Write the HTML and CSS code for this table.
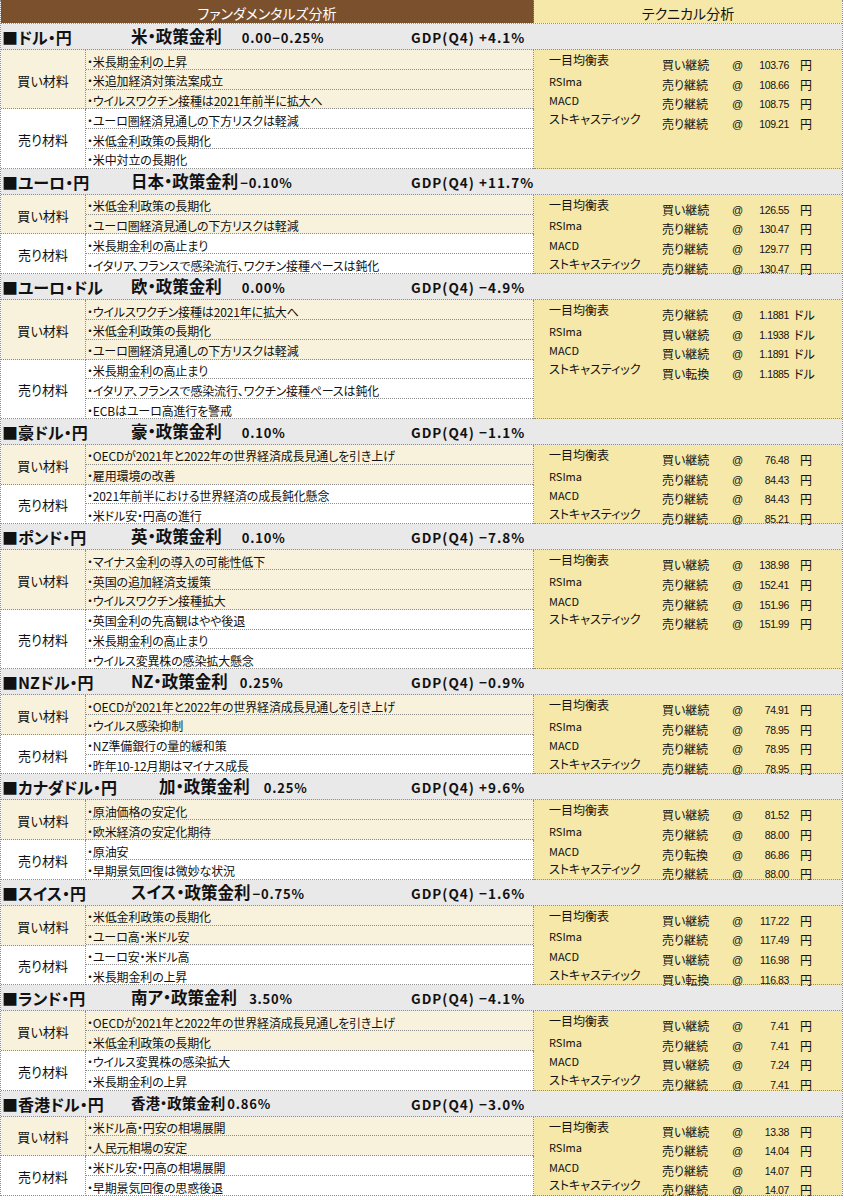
FILE: index.html
```html
<!DOCTYPE html>
<html lang="ja">
<head>
<meta charset="utf-8">
<title>ファンダメンタルズ分析 / テクニカル分析</title>
<link rel="stylesheet" href="styles.css">
</head>
<body>
<div class="sheet">
  <div class="top">
    <div class="top-fund">ファンダメンタルズ分析</div>
    <div class="top-tech">テクニカル分析</div>
  </div>

  <!-- 1 ドル・円 -->
  <section class="pair">
    <div class="pair-head">
      <span class="pair-title">■ドル・円</span>
      <span class="pair-rate"><span class="rate-name">米・政策金利</span><span class="rate-val">0.00−0.25%</span></span>
      <span class="pair-gdp">GDP(Q4) +4.1%</span>
    </div>
    <div class="pair-body">
      <div class="factor buy">買い材料</div>
      <div class="items buy">
        <div class="item">・米長期金利の上昇</div>
        <div class="item">・米追加経済対策法案成立</div>
        <div class="item">・ウイルスワクチン接種は2021年前半に拡大へ</div>
      </div>
      <div class="factor sell">売り材料</div>
      <div class="items sell">
        <div class="item">・ユーロ圏経済見通しの下方リスクは軽減</div>
        <div class="item">・米低金利政策の長期化</div>
        <div class="item">・米中対立の長期化</div>
      </div>
      <div class="tech">
        <div class="trow"><span class="t-label">一目均衡表</span><span class="t-sig">買い継続</span><span class="t-at">@</span><span class="t-num">103.76</span><span class="t-unit">円</span></div>
        <div class="trow"><span class="t-label t-latin">RSIma</span><span class="t-sig">売り継続</span><span class="t-at">@</span><span class="t-num">108.66</span><span class="t-unit">円</span></div>
        <div class="trow"><span class="t-label t-latin">MACD</span><span class="t-sig">売り継続</span><span class="t-at">@</span><span class="t-num">108.75</span><span class="t-unit">円</span></div>
        <div class="trow"><span class="t-label">ストキャスティック</span><span class="t-sig">売り継続</span><span class="t-at">@</span><span class="t-num">109.21</span><span class="t-unit">円</span></div>
      </div>
    </div>
  </section>

  <!-- 2 ユーロ・円 -->
  <section class="pair">
    <div class="pair-head">
      <span class="pair-title">■ユーロ・円</span>
      <span class="pair-rate pair-rate--tight"><span class="rate-name">日本・政策金利</span><span class="rate-val">−0.10%</span></span>
      <span class="pair-gdp">GDP(Q4) +11.7%</span>
    </div>
    <div class="pair-body">
      <div class="factor buy">買い材料</div>
      <div class="items buy">
        <div class="item">・米低金利政策の長期化</div>
        <div class="item">・ユーロ圏経済見通しの下方リスクは軽減</div>
      </div>
      <div class="factor sell">売り材料</div>
      <div class="items sell">
        <div class="item">・米長期金利の高止まり</div>
        <div class="item">・イタリア、フランスで感染流行、ワクチン接種ペースは鈍化</div>
      </div>
      <div class="tech">
        <div class="trow"><span class="t-label">一目均衡表</span><span class="t-sig">買い継続</span><span class="t-at">@</span><span class="t-num">126.55</span><span class="t-unit">円</span></div>
        <div class="trow"><span class="t-label t-latin">RSIma</span><span class="t-sig">売り継続</span><span class="t-at">@</span><span class="t-num">130.47</span><span class="t-unit">円</span></div>
        <div class="trow"><span class="t-label t-latin">MACD</span><span class="t-sig">売り継続</span><span class="t-at">@</span><span class="t-num">129.77</span><span class="t-unit">円</span></div>
        <div class="trow"><span class="t-label">ストキャスティック</span><span class="t-sig">売り継続</span><span class="t-at">@</span><span class="t-num">130.47</span><span class="t-unit">円</span></div>
      </div>
    </div>
  </section>

  <!-- 3 ユーロ・ドル -->
  <section class="pair">
    <div class="pair-head">
      <span class="pair-title">■ユーロ・ドル</span>
      <span class="pair-rate"><span class="rate-name">欧・政策金利</span><span class="rate-val">0.00%</span></span>
      <span class="pair-gdp">GDP(Q4) −4.9%</span>
    </div>
    <div class="pair-body">
      <div class="factor buy">買い材料</div>
      <div class="items buy">
        <div class="item">・ウイルスワクチン接種は2021年に拡大へ</div>
        <div class="item">・米低金利政策の長期化</div>
        <div class="item">・ユーロ圏経済見通しの下方リスクは軽減</div>
      </div>
      <div class="factor sell">売り材料</div>
      <div class="items sell">
        <div class="item">・米長期金利の高止まり</div>
        <div class="item">・イタリア、フランスで感染流行、ワクチン接種ペースは鈍化</div>
        <div class="item">・ECBはユーロ高進行を警戒</div>
      </div>
      <div class="tech">
        <div class="trow"><span class="t-label">一目均衡表</span><span class="t-sig">売り継続</span><span class="t-at">@</span><span class="t-num">1.1881</span><span class="t-unit t-unit-dollar">ドル</span></div>
        <div class="trow"><span class="t-label t-latin">RSIma</span><span class="t-sig">買い継続</span><span class="t-at">@</span><span class="t-num">1.1938</span><span class="t-unit t-unit-dollar">ドル</span></div>
        <div class="trow"><span class="t-label t-latin">MACD</span><span class="t-sig">買い継続</span><span class="t-at">@</span><span class="t-num">1.1891</span><span class="t-unit t-unit-dollar">ドル</span></div>
        <div class="trow"><span class="t-label">ストキャスティック</span><span class="t-sig">買い転換</span><span class="t-at">@</span><span class="t-num">1.1885</span><span class="t-unit t-unit-dollar">ドル</span></div>
      </div>
    </div>
  </section>

  <!-- 4 豪ドル・円 -->
  <section class="pair">
    <div class="pair-head">
      <span class="pair-title">■豪ドル・円</span>
      <span class="pair-rate"><span class="rate-name">豪・政策金利</span><span class="rate-val">0.10%</span></span>
      <span class="pair-gdp">GDP(Q4) −1.1%</span>
    </div>
    <div class="pair-body">
      <div class="factor buy">買い材料</div>
      <div class="items buy">
        <div class="item">・OECDが2021年と2022年の世界経済成長見通しを引き上げ</div>
        <div class="item">・雇用環境の改善</div>
      </div>
      <div class="factor sell">売り材料</div>
      <div class="items sell">
        <div class="item">・2021年前半における世界経済の成長鈍化懸念</div>
        <div class="item">・米ドル安・円高の進行</div>
      </div>
      <div class="tech">
        <div class="trow"><span class="t-label">一目均衡表</span><span class="t-sig">買い継続</span><span class="t-at">@</span><span class="t-num">76.48</span><span class="t-unit">円</span></div>
        <div class="trow"><span class="t-label t-latin">RSIma</span><span class="t-sig">売り継続</span><span class="t-at">@</span><span class="t-num">84.43</span><span class="t-unit">円</span></div>
        <div class="trow"><span class="t-label t-latin">MACD</span><span class="t-sig">売り継続</span><span class="t-at">@</span><span class="t-num">84.43</span><span class="t-unit">円</span></div>
        <div class="trow"><span class="t-label">ストキャスティック</span><span class="t-sig">売り継続</span><span class="t-at">@</span><span class="t-num">85.21</span><span class="t-unit">円</span></div>
      </div>
    </div>
  </section>

  <!-- 5 ポンド・円 -->
  <section class="pair">
    <div class="pair-head">
      <span class="pair-title">■ポンド・円</span>
      <span class="pair-rate"><span class="rate-name">英・政策金利</span><span class="rate-val">0.10%</span></span>
      <span class="pair-gdp">GDP(Q4) −7.8%</span>
    </div>
    <div class="pair-body">
      <div class="factor buy">買い材料</div>
      <div class="items buy">
        <div class="item">・マイナス金利の導入の可能性低下</div>
        <div class="item">・英国の追加経済支援策</div>
        <div class="item">・ウイルスワクチン接種拡大</div>
      </div>
      <div class="factor sell">売り材料</div>
      <div class="items sell">
        <div class="item">・英国金利の先高観はやや後退</div>
        <div class="item">・米長期金利の高止まり</div>
        <div class="item">・ウイルス変異株の感染拡大懸念</div>
      </div>
      <div class="tech">
        <div class="trow"><span class="t-label">一目均衡表</span><span class="t-sig">買い継続</span><span class="t-at">@</span><span class="t-num">138.98</span><span class="t-unit">円</span></div>
        <div class="trow"><span class="t-label t-latin">RSIma</span><span class="t-sig">売り継続</span><span class="t-at">@</span><span class="t-num">152.41</span><span class="t-unit">円</span></div>
        <div class="trow"><span class="t-label t-latin">MACD</span><span class="t-sig">売り継続</span><span class="t-at">@</span><span class="t-num">151.96</span><span class="t-unit">円</span></div>
        <div class="trow"><span class="t-label">ストキャスティック</span><span class="t-sig">売り継続</span><span class="t-at">@</span><span class="t-num">151.99</span><span class="t-unit">円</span></div>
      </div>
    </div>
  </section>

  <!-- 6 NZドル・円 -->
  <section class="pair">
    <div class="pair-head">
      <span class="pair-title">■NZドル・円</span>
      <span class="pair-rate pair-rate--mid"><span class="rate-name">NZ・政策金利</span><span class="rate-val">0.25%</span></span>
      <span class="pair-gdp">GDP(Q4) −0.9%</span>
    </div>
    <div class="pair-body">
      <div class="factor buy">買い材料</div>
      <div class="items buy">
        <div class="item">・OECDが2021年と2022年の世界経済成長見通しを引き上げ</div>
        <div class="item">・ウイルス感染抑制</div>
      </div>
      <div class="factor sell">売り材料</div>
      <div class="items sell">
        <div class="item">・NZ準備銀行の量的緩和策</div>
        <div class="item">・昨年10-12月期はマイナス成長</div>
      </div>
      <div class="tech">
        <div class="trow"><span class="t-label">一目均衡表</span><span class="t-sig">買い継続</span><span class="t-at">@</span><span class="t-num">74.91</span><span class="t-unit">円</span></div>
        <div class="trow"><span class="t-label t-latin">RSIma</span><span class="t-sig">売り継続</span><span class="t-at">@</span><span class="t-num">78.95</span><span class="t-unit">円</span></div>
        <div class="trow"><span class="t-label t-latin">MACD</span><span class="t-sig">売り継続</span><span class="t-at">@</span><span class="t-num">78.95</span><span class="t-unit">円</span></div>
        <div class="trow"><span class="t-label">ストキャスティック</span><span class="t-sig">売り継続</span><span class="t-at">@</span><span class="t-num">78.95</span><span class="t-unit">円</span></div>
      </div>
    </div>
  </section>

  <!-- 7 カナダドル・円 -->
  <section class="pair">
    <div class="pair-head">
      <span class="pair-title">■カナダドル・円</span>
      <span class="pair-rate pair-rate--shift"><span class="rate-name">加・政策金利</span><span class="rate-val">0.25%</span></span>
      <span class="pair-gdp">GDP(Q4) +9.6%</span>
    </div>
    <div class="pair-body">
      <div class="factor buy">買い材料</div>
      <div class="items buy">
        <div class="item">・原油価格の安定化</div>
        <div class="item">・欧米経済の安定化期待</div>
      </div>
      <div class="factor sell">売り材料</div>
      <div class="items sell">
        <div class="item">・原油安</div>
        <div class="item">・早期景気回復は微妙な状況</div>
      </div>
      <div class="tech">
        <div class="trow"><span class="t-label">一目均衡表</span><span class="t-sig">買い継続</span><span class="t-at">@</span><span class="t-num">81.52</span><span class="t-unit">円</span></div>
        <div class="trow"><span class="t-label t-latin">RSIma</span><span class="t-sig">売り継続</span><span class="t-at">@</span><span class="t-num">88.00</span><span class="t-unit">円</span></div>
        <div class="trow"><span class="t-label t-latin">MACD</span><span class="t-sig">売り転換</span><span class="t-at">@</span><span class="t-num">86.86</span><span class="t-unit">円</span></div>
        <div class="trow"><span class="t-label">ストキャスティック</span><span class="t-sig">売り継続</span><span class="t-at">@</span><span class="t-num">88.00</span><span class="t-unit">円</span></div>
      </div>
    </div>
  </section>

  <!-- 8 スイス・円 -->
  <section class="pair">
    <div class="pair-head">
      <span class="pair-title">■スイス・円</span>
      <span class="pair-rate pair-rate--tight"><span class="rate-name">スイス・政策金利</span><span class="rate-val">−0.75%</span></span>
      <span class="pair-gdp">GDP(Q4) −1.6%</span>
    </div>
    <div class="pair-body">
      <div class="factor buy">買い材料</div>
      <div class="items buy">
        <div class="item">・米低金利政策の長期化</div>
        <div class="item">・ユーロ高・米ドル安</div>
      </div>
      <div class="factor sell">売り材料</div>
      <div class="items sell">
        <div class="item">・ユーロ安・米ドル高</div>
        <div class="item">・米長期金利の上昇</div>
      </div>
      <div class="tech">
        <div class="trow"><span class="t-label">一目均衡表</span><span class="t-sig">買い継続</span><span class="t-at">@</span><span class="t-num">117.22</span><span class="t-unit">円</span></div>
        <div class="trow"><span class="t-label t-latin">RSIma</span><span class="t-sig">売り継続</span><span class="t-at">@</span><span class="t-num">117.49</span><span class="t-unit">円</span></div>
        <div class="trow"><span class="t-label t-latin">MACD</span><span class="t-sig">買い継続</span><span class="t-at">@</span><span class="t-num">116.98</span><span class="t-unit">円</span></div>
        <div class="trow"><span class="t-label">ストキャスティック</span><span class="t-sig">買い転換</span><span class="t-at">@</span><span class="t-num">116.83</span><span class="t-unit">円</span></div>
      </div>
    </div>
  </section>

  <!-- 9 ランド・円 -->
  <section class="pair">
    <div class="pair-head">
      <span class="pair-title">■ランド・円</span>
      <span class="pair-rate pair-rate--mid"><span class="rate-name">南ア・政策金利</span><span class="rate-val">3.50%</span></span>
      <span class="pair-gdp">GDP(Q4) −4.1%</span>
    </div>
    <div class="pair-body">
      <div class="factor buy">買い材料</div>
      <div class="items buy">
        <div class="item">・OECDが2021年と2022年の世界経済成長見通しを引き上げ</div>
        <div class="item">・米低金利政策の長期化</div>
      </div>
      <div class="factor sell">売り材料</div>
      <div class="items sell">
        <div class="item">・ウイルス変異株の感染拡大</div>
        <div class="item">・米長期金利の上昇</div>
      </div>
      <div class="tech">
        <div class="trow"><span class="t-label">一目均衡表</span><span class="t-sig">買い継続</span><span class="t-at">@</span><span class="t-num">7.41</span><span class="t-unit">円</span></div>
        <div class="trow"><span class="t-label t-latin">RSIma</span><span class="t-sig">売り継続</span><span class="t-at">@</span><span class="t-num">7.41</span><span class="t-unit">円</span></div>
        <div class="trow"><span class="t-label t-latin">MACD</span><span class="t-sig">買い継続</span><span class="t-at">@</span><span class="t-num">7.24</span><span class="t-unit">円</span></div>
        <div class="trow"><span class="t-label">ストキャスティック</span><span class="t-sig">売り継続</span><span class="t-at">@</span><span class="t-num">7.41</span><span class="t-unit">円</span></div>
      </div>
    </div>
  </section>

  <!-- 10 香港ドル・円 -->
  <section class="pair">
    <div class="pair-head">
      <span class="pair-title">■香港ドル・円</span>
      <span class="pair-rate pair-rate--tight"><span class="rate-name rate-name--small">香港・政策金利</span><span class="rate-val">0.86%</span></span>
      <span class="pair-gdp">GDP(Q4) −3.0%</span>
    </div>
    <div class="pair-body">
      <div class="factor buy">買い材料</div>
      <div class="items buy">
        <div class="item">・米ドル高・円安の相場展開</div>
        <div class="item">・人民元相場の安定</div>
      </div>
      <div class="factor sell">売り材料</div>
      <div class="items sell">
        <div class="item">・米ドル安・円高の相場展開</div>
        <div class="item">・早期景気回復の思惑後退</div>
      </div>
      <div class="tech">
        <div class="trow"><span class="t-label">一目均衡表</span><span class="t-sig">買い継続</span><span class="t-at">@</span><span class="t-num">13.38</span><span class="t-unit">円</span></div>
        <div class="trow"><span class="t-label t-latin">RSIma</span><span class="t-sig">売り継続</span><span class="t-at">@</span><span class="t-num">14.04</span><span class="t-unit">円</span></div>
        <div class="trow"><span class="t-label t-latin">MACD</span><span class="t-sig">売り継続</span><span class="t-at">@</span><span class="t-num">14.07</span><span class="t-unit">円</span></div>
        <div class="trow"><span class="t-label">ストキャスティック</span><span class="t-sig">売り継続</span><span class="t-at">@</span><span class="t-num">14.07</span><span class="t-unit">円</span></div>
      </div>
    </div>
  </section>
</div>
</body>
</html>
```

FILE: styles.css
```css
* { box-sizing: border-box; }

html, body {
  margin: 0;
  padding: 0;
  background: #ffffff;
}

body {
  font-family: "Noto Sans CJK JP", "Noto Sans", sans-serif;
  font-feature-settings: "palt";
  color: #111111;
  font-size: 12px;
}

.sheet {
  width: 843px;
  border-left: 1px dotted #8c8c8c;
  border-right: 1px dotted #8c8c8c;
}

/* ---------- top header ---------- */
.top {
  display: grid;
  grid-template-columns: 533px 1fr;
  height: 24px;
  border-bottom: 1px dotted #8c8c8c;
}

.top-fund,
.top-tech {
  display: flex;
  align-items: center;
  justify-content: center;
  padding-top: 2px;
  font-size: 14px;
  line-height: 16px;
}

.top-fund {
  background: #7a512c;
  color: #ffffff;
  border-right: 1px dotted #8c8c8c;
}

.top-tech {
  background: #f5e8a8;
  color: #111111;
}

/* ---------- pair header ---------- */
.pair-head {
  display: grid;
  grid-template-columns: 129px 280px auto;
  align-items: center;
  height: 26px;
  padding-top: 1px;
  padding-left: 1px;
  background: #e9e9e9;
  border-bottom: 1px dotted #8c8c8c;
  font-weight: 700;
  white-space: nowrap;
}

.pair-title {
  font-size: 16px;
  line-height: 18px;
}

.pair-rate {
  display: flex;
  align-items: baseline;
  gap: 20px;
}

.pair-rate--mid {
  gap: 12px;
}

.pair-rate--tight {
  gap: 2px;
}

.pair-rate--shift {
  padding-left: 28px;
  gap: 14px;
}

.rate-name {
  font-size: 16.5px;
  line-height: 18px;
}

.rate-name--small {
  font-size: 14.5px;
}

.rate-val {
  font-size: 13px;
  letter-spacing: 0.8px;
}

.pair-gdp {
  font-size: 13.5px;
  letter-spacing: 1px;
}

/* ---------- pair body ---------- */
.pair-body {
  display: grid;
  grid-template-columns: 85px 448px 1fr;
  grid-auto-rows: auto;
}

.factor {
  grid-column: 1;
  display: flex;
  align-items: center;
  justify-content: center;
  padding-top: 3px;
  font-size: 13px;
  line-height: 16px;
  border-right: 1px dotted #8c8c8c;
  border-bottom: 1px dotted #8c8c8c;
}

.items {
  grid-column: 2;
  border-right: 1px dotted #8c8c8c;
}

.buy { background: #f8f2dc; }
.sell { background: #ffffff; }

.factor.buy, .items.buy { grid-row: 1; }
.factor.sell, .items.sell { grid-row: 2; }

.item {
  height: 19.8px;
  padding-top: 3.5px;
  padding-left: 1px;
  font-size: 12px;
  line-height: 15px;
  letter-spacing: -0.15px;
  white-space: nowrap;
  border-bottom: 1px dotted #8c8c8c;
}

/* ---------- technical ---------- */
.tech {
  grid-column: 3;
  grid-row: 1 / span 2;
  background: #f5e8a8;
  border-bottom: 1px dotted #8c8c8c;
  padding-left: 15px;
}

.trow {
  display: grid;
  grid-template-columns: 113px 70px 20px 37px auto;
  align-items: start;
  height: 19.6px;
  white-space: nowrap;
}

.t-label {
  padding-top: 3px;
  font-size: 12px;
  line-height: 14px;
}

.t-latin {
  font-size: 11px;
  padding-top: 4px;
}

.t-sig,
.t-at,
.t-num,
.t-unit {
  padding-top: 8px;
  line-height: 14px;
}

.t-sig { font-size: 12px; }

.t-at {
  font-family: "Liberation Sans", sans-serif;
  font-size: 11px;
}

.t-num {
  font-family: "Liberation Sans", sans-serif;
  font-size: 10.5px;
  letter-spacing: -0.4px;
  text-align: right;
}

.t-unit {
  padding-left: 11px;
  font-size: 12px;
}

.t-unit-dollar {
  padding-left: 5px;
}
```
